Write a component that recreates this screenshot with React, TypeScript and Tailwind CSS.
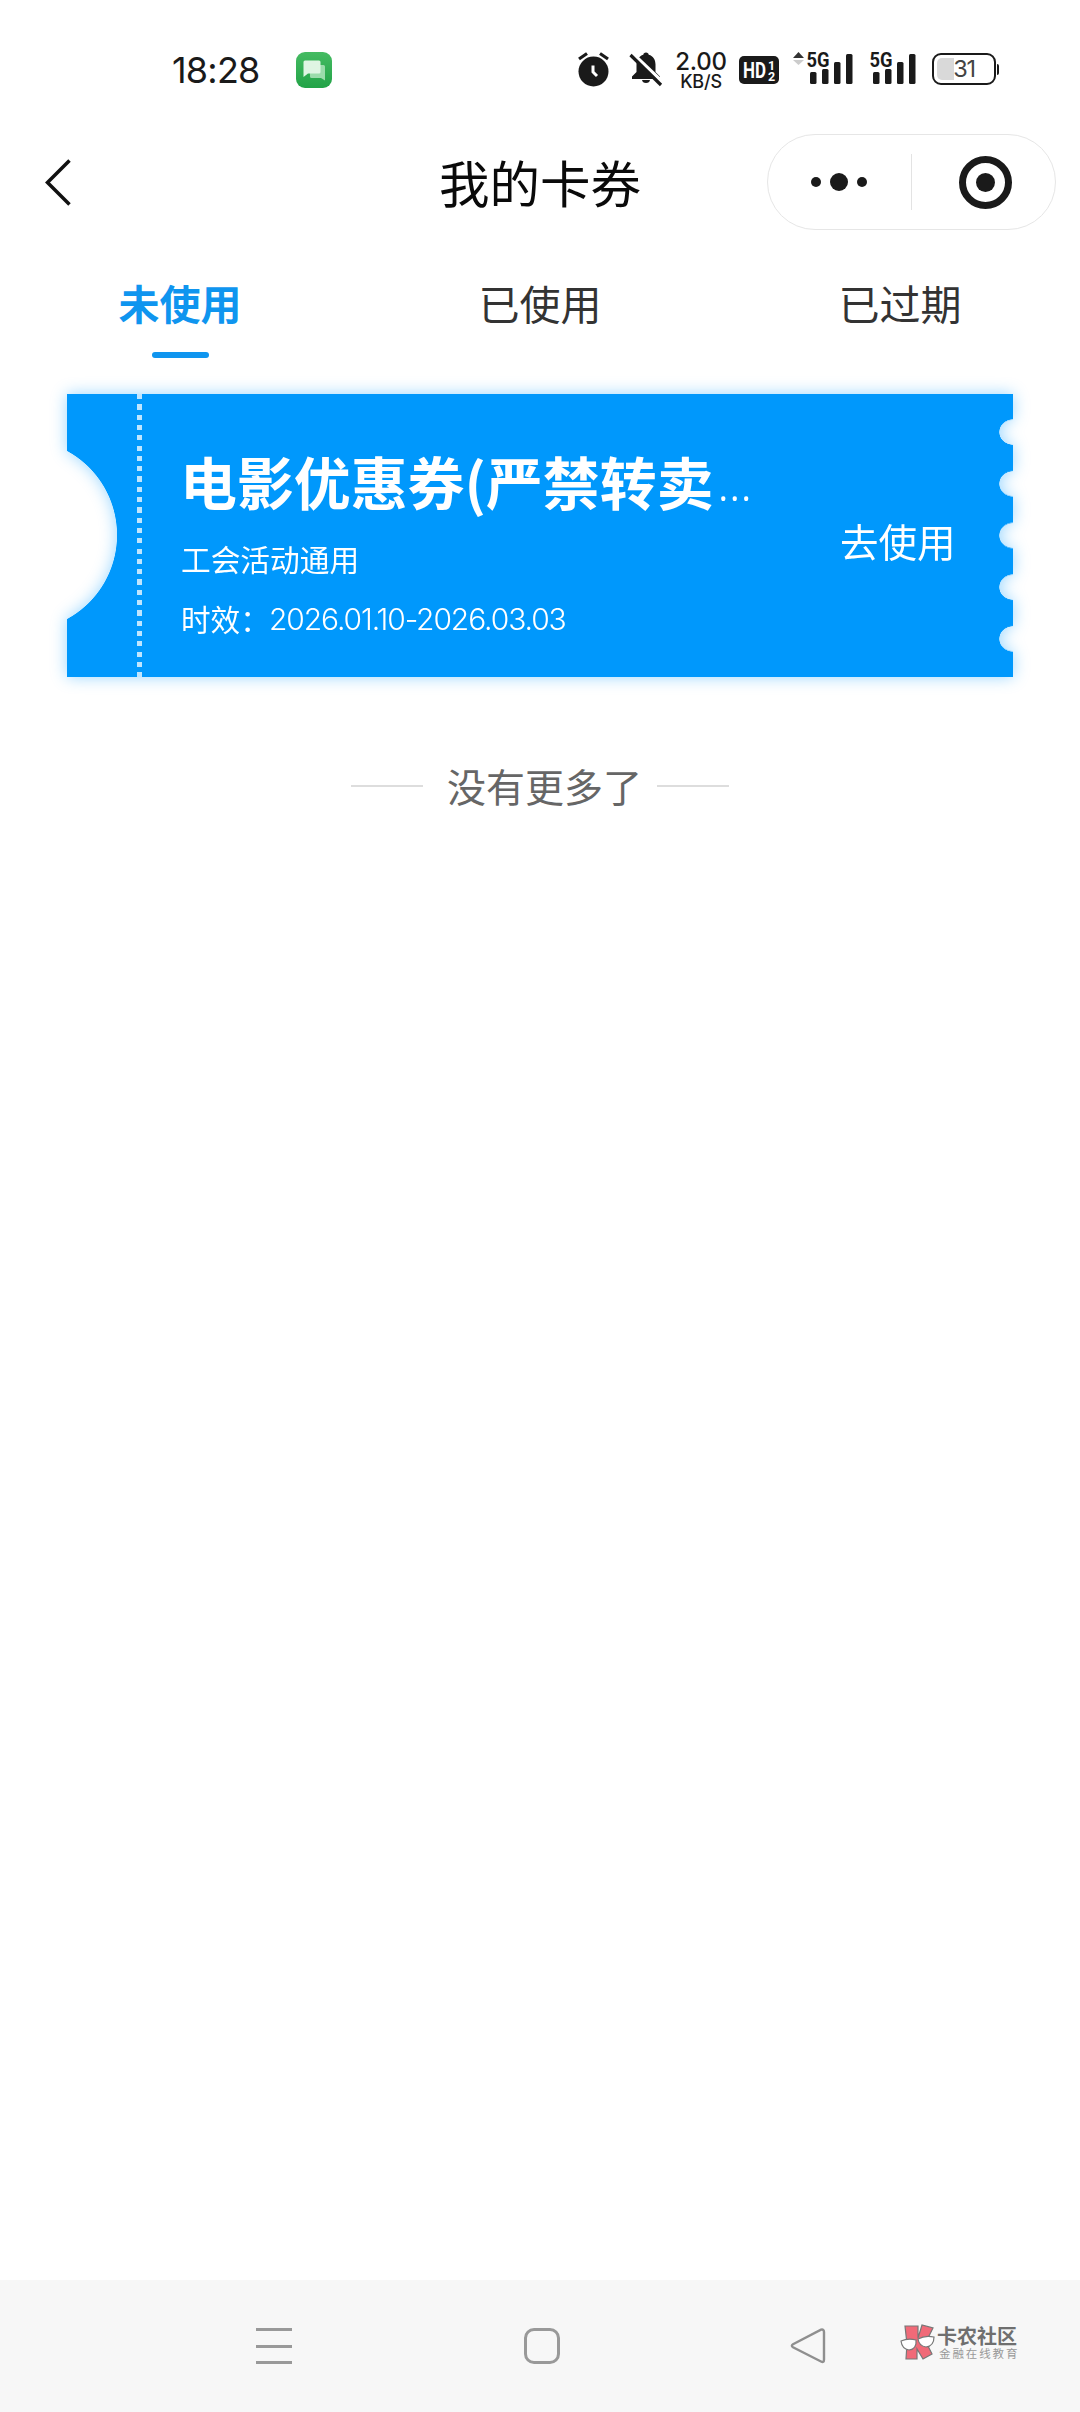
import React from "react";

const SANS = "font-['Inter','Noto_Sans_CJK_SC',sans-serif]";
const CJK = "font-['Noto_Sans_CJK_SC',sans-serif]";

function MessageIcon() {
  return (
    <svg width="36" height="36" viewBox="0 0 36 36" className="ml-[36px] mt-px shrink-0">
      <defs>
        <linearGradient id="msg" x1="0" y1="0" x2="0" y2="1">
          <stop offset="0" stopColor="#45bb62" />
          <stop offset="1" stopColor="#22a347" />
        </linearGradient>
      </defs>
      <rect width="36" height="36" rx="9" fill="url(#msg)" />
      <path d="M15 13h12.500q1.500 0 1.500 1.500V28.500l-4-2.500H15.500Q14 26 14 24.500V14z" fill="#9bdcab" />
      <path d="M9 8.500h14q1.500 0 1.500 1.500V20q0 1.500-1.500 1.500H12L7.500 25V10Q7.500 8.500 9 8.500z" fill="#dff5e3" />
    </svg>
  );
}

function AlarmIcon() {
  return (
    <svg width="33" height="36" viewBox="0 0 33 36" className="shrink-0">
      <circle cx="16.500" cy="20.500" r="15" fill="#1a1a1a" />
      <path d="M2 8L10 2.500M31 8L23 2.500" stroke="#1a1a1a" strokeWidth="3.200" />
      <path d="M16 14.500v6.500l4 4" fill="none" stroke="#fff" strokeWidth="3" />
    </svg>
  );
}

function MutedBellIcon() {
  return (
    <svg width="34" height="36" viewBox="0 0 34 36" className="ml-[19px] shrink-0">
      <path
        d="M17 1.500c1.700 0 2.500 1 2.700 2.200C24.500 5 26.500 9 26.500 13.500V21l4.500 4.500v2.500H3v-2.500L7.500 21v-7.500C7.500 9 10 5 14.300 3.700 14.500 2.500 15.300 1.500 17 1.500z"
        fill="#1a1a1a"
      />
      <path d="M13 29h8q-.5 3-4 3t-4-3z" fill="#1a1a1a" />
      <path d="M0 -1L34 31.500" stroke="#fff" strokeWidth="3.500" />
      <path d="M1.500 4L32 34" stroke="#1a1a1a" strokeWidth="3.200" />
    </svg>
  );
}

function Signal({ arrows }: { arrows?: boolean }) {
  return (
    <svg width="64" height="44" viewBox="0 -8 64 44" className="-mt-[8px] shrink-0">
      {arrows && (
        <>
          <path d="M3 7L8.500 1l5.500 6z" fill="#333" />
          <path d="M3 9h11l-5.500 5z" fill="#ccc" />
        </>
      )}
      <text x="16.500" y="15.500" fontSize="20" fontWeight="700" textLength="23" lengthAdjust="spacingAndGlyphs" fontFamily="Roboto, sans-serif" fill="#1a1a1a">
        5G
      </text>
      <rect x="20" y="21" width="6.500" height="12" rx="1.500" fill="#1a1a1a" />
      <rect x="32" y="18" width="6.500" height="15" rx="1.500" fill="#1a1a1a" />
      <rect x="44" y="11" width="6.500" height="22" rx="1.500" fill="#1a1a1a" />
      <rect x="56" y="3" width="6.500" height="30" rx="1.500" fill="#1a1a1a" />
    </svg>
  );
}

function Battery() {
  return (
    <div className="ml-[15px] flex h-[36px] items-center">
      <div className="relative flex h-[32px] w-[64px] items-center justify-center rounded-[9px] border-2 border-[#1a1a1a]">
        <div className="absolute left-[3px] top-[3px] h-[22px] w-[17px] rounded-l-[5px] bg-[#d9d9d9]" />
        <span className="relative text-[23.500px] leading-none tracking-[-1.200px] text-[#444]">31</span>
      </div>
      <div className="ml-[1px] h-[11px] w-[2px] rounded-r-sm bg-[#1a1a1a]" />
    </div>
  );
}

function StatusBar() {
  return (
    <div className="flex h-[120px] pl-[172px] pt-[51px] text-[#1a1a1a]">
      <span className="w-[88px] pt-[1px] text-[36px] leading-[36px] tracking-[-0.800px] whitespace-nowrap">18:28</span>
      <MessageIcon />
      <div className="ml-[245px] flex h-[36px] items-start">
        <AlarmIcon />
        <MutedBellIcon />
        <div className="ml-[12px] flex w-[52px] flex-col items-center">
          <span className="text-[24px] font-medium leading-[22px] tracking-[-0.200px]">2.00</span>
          <span className="text-[18px] font-medium leading-[17px] tracking-[-0.200px]">KB/S</span>
        </div>
        <div className="ml-[12px] mt-[5px] flex h-[28px] w-[40px] items-center justify-center rounded-[5px] bg-[#1a1a1a]">
          <svg width="36" height="28" viewBox="0 0 36 28" fill="#fff" fontFamily="Roboto, sans-serif" fontWeight="700">
            <text x="2" y="21.500" fontSize="22" textLength="23" lengthAdjust="spacingAndGlyphs">HD</text>
            <text x="27" y="13.500" fontSize="12.500">1</text>
            <text x="27" y="24.500" fontSize="12.500">2</text>
          </svg>
        </div>
        <div className="ml-[11px] flex items-start">
          <Signal arrows />
          <div className="-ml-[1px]">
            <Signal />
          </div>
          <Battery />
        </div>
      </div>
    </div>
  );
}

function NavBar() {
  return (
    <div className="grid h-[124px] grid-cols-[1fr_auto_1fr] pt-[14px]">
      <svg width="27" height="48" viewBox="0 0 27 48" className="ml-[44px] mt-[25px]">
        <path d="M25.500 1.500L3.500 23.500l22 22" fill="none" stroke="#111" strokeWidth="3.500" />
      </svg>
      <h1 className={`${CJK} mt-[9px] h-[76px] text-[50.500px] font-normal leading-[76px] text-[#0a0a0a]`}>我的卡券</h1>
      <div className="mr-[24px] flex h-[96px] w-[289px] items-center justify-self-end rounded-full border border-[#e6e6e6]">
        <div className="flex w-[143px] items-center justify-center gap-[9px] pr-[2px]">
          <i className="size-[10px] rounded-full bg-[#1a1a1a]" />
          <i className="size-[18px] rounded-full bg-[#1a1a1a]" />
          <i className="size-[10px] rounded-full bg-[#1a1a1a]" />
        </div>
        <div className="h-[56px] w-px bg-[#e3e3e3]" />
        <div className="flex flex-1 justify-center pl-[4px]">
          <div className="flex size-[53px] items-center justify-center rounded-full border-[7px] border-[#1a1a1a]">
            <i className="size-[19px] rounded-full bg-[#1a1a1a]" />
          </div>
        </div>
      </div>
    </div>
  );
}

function Tabs() {
  const tabs = ["未使用", "已使用", "已过期"];
  return (
    <div className={`${CJK} grid h-[150px] grid-cols-3 pt-[28px] text-center text-[41px] leading-[60px]`}>
      {tabs.map((t, i) => (
        <div key={t} className={i === 0 ? "flex flex-col items-center font-bold text-[#0f95ef]" : "text-[#333]"}>
          {t}
          {i === 0 && <div className="mt-[20px] h-[6px] w-[57px] rounded-full bg-[#0f95ef]" />}
        </div>
      ))}
    </div>
  );
}

function Ticket() {
  return (
    <div className="mx-[67px] flex h-[283px] text-white drop-shadow-[0_0_8px_rgba(0,153,255,0.4)]">
      {/* stub with the large half-round cut */}
      <div className="w-[70px] bg-[radial-gradient(circle_at_-45.600px_141px,transparent_95.300px,#0098fc_96px)]" />
      <div className="w-[5px] bg-[#0098fc]">
        <div className="h-full bg-[repeating-linear-gradient(to_bottom,rgba(255,255,255,0.75)_0_5.200px,transparent_5.200px_10.300px)]" />
      </div>
      <div className="flex flex-1 bg-[#0098fc] pl-[40px]">
        <div className="w-[585px] pt-[45px]">
          <div className="-ml-[2px] flex h-[82px] whitespace-nowrap">
            <span className={`${CJK} text-[56.900px] font-bold leading-[82px]`}>电影优惠券(严禁转卖</span>
            <span className="ml-[4px] font-['Noto_Sans',sans-serif] text-[47px] font-light leading-[88px]">…</span>
          </div>
          <div className={`${CJK} -ml-[1px] mt-[16px] text-[29.700px] leading-[44px]`}>工会活动通用</div>
          <div className="-ml-[1px] mt-[16px] flex items-center leading-[44px] whitespace-nowrap">
            <span className={`${CJK} w-[88px] shrink-0 text-[29.600px]`}>时效：</span>
            <span className="text-[30px] font-light tracking-[-1.100px]">2026.01.10-2026.03.03</span>
          </div>
        </div>
        <div className={`${CJK} ml-[73px] mt-[117px] h-[58px] whitespace-nowrap text-[38.500px] leading-[58px]`}>去使用</div>
      </div>
      {/* perforated edge */}
      <div className="w-[15px] bg-[radial-gradient(ellipse_14px_12.900px_at_100%_50%,transparent_96%,#0098fc_100%)] bg-[length:15px_51.700px] bg-[position:0_12.250px]" />
    </div>
  );
}

function Watermark() {
  return (
    <div className="ml-[74px] mt-[44px] flex">
      <svg width="36" height="37" viewBox="0 0 36 37">
        <g fill="#f06a78" stroke="#777" strokeWidth="1.200">
          <path d="M5 2h13v12l4-13 11 3-7 14 6 12-9 5-6-10v10H6l1-15z" />
        </g>
        <g fill="#fff" stroke="#777" strokeWidth="1.200">
          <path d="M1 17q7-3 15-1 1 9-7 10-7-1-8-9z" />
          <path d="M18 15q7-4 16-2 0 9-8 10-7-1-8-8z" />
        </g>
      </svg>
      <div className={`${CJK} ml-[1px] whitespace-nowrap`}>
        <div className="mt-px text-[20px] font-bold leading-[22px] text-[#6f6f6f]">卡农社区</div>
        <div className="ml-[2px] text-[11.500px] leading-[13px] tracking-[1.900px] text-[#999]">金融在线教育</div>
      </div>
    </div>
  );
}

function SystemNav() {
  return (
    <div className="flex h-[132px] bg-[#f7f7f7] pl-[256px]">
      <div className="mt-[48px] flex h-[36px] w-[36px] flex-col justify-between">
        <i className="h-[3px] bg-[#999]" />
        <i className="h-[3px] bg-[#999]" />
        <i className="h-[3px] bg-[#999]" />
      </div>
      <div className="ml-[232px] mt-[48px] size-[36px] rounded-[10px] border-[3px] border-[#999]" />
      <svg width="36" height="36" viewBox="0 0 36 36" className="ml-[230px] mt-[48px]">
        <path d="M3 16.200L31 1.700Q34 1 34 4v27.500Q34 35 31 33.500L3 19.200Q.7 17.700 3 16.200z" fill="none" stroke="#8f8f8f" strokeWidth="2.400" />
      </svg>
      <Watermark />
    </div>
  );
}

export default function App() {
  return (
    <div className={`${SANS} flex h-[2412px] w-[1080px] flex-col overflow-hidden bg-white`}>
      <StatusBar />
      <NavBar />
      <Tabs />
      <Ticket />
      <div className={`${CJK} mt-[80px] flex h-[58px] items-center justify-center text-[39px] leading-[58px] text-[#666]`}>
        <i className="h-[2px] w-[72px] bg-[#ddd]" />
        <span className="-mt-[3px] ml-[24px] mr-[15px]">没有更多了</span>
        <i className="h-[2px] w-[72px] bg-[#ddd]" />
      </div>
      <div className="flex-1" />
      <SystemNav />
    </div>
  );
}
